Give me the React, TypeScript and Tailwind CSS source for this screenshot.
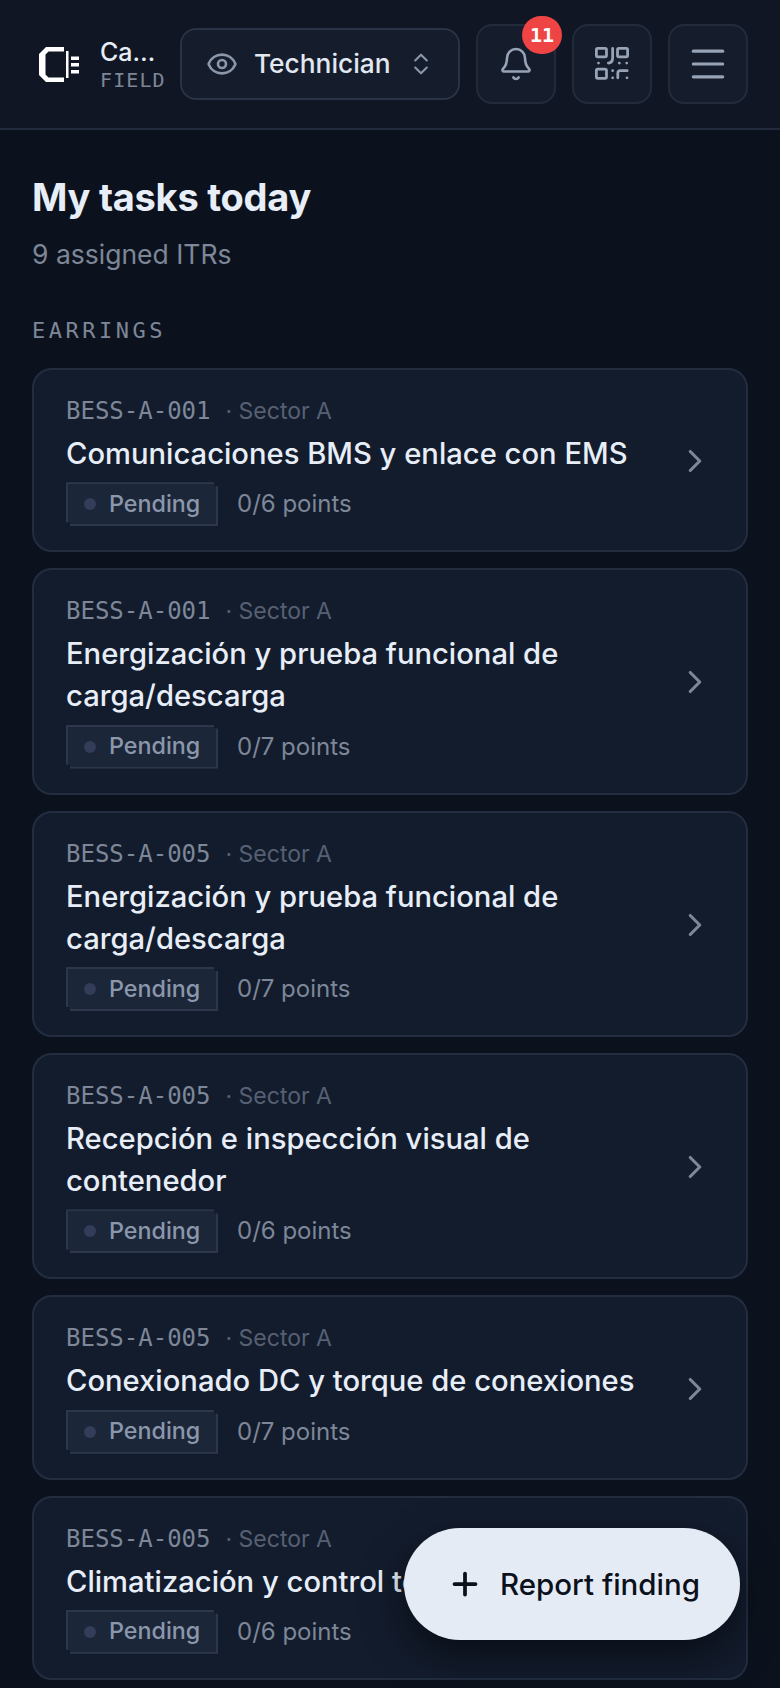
import React from "react";
import { Eye, ChevronsUpDown, Bell, Menu, ChevronRight, Plus } from "lucide-react";

const tasks = [
  { id: "BESS-A-001", title: "Comunicaciones BMS y enlace con EMS", pts: "0/6 points" },
  { id: "BESS-A-001", title: "Energización y prueba funcional de carga/descarga", pts: "0/7 points" },
  { id: "BESS-A-005", title: "Energización y prueba funcional de carga/descarga", pts: "0/7 points" },
  { id: "BESS-A-005", title: "Recepción e inspección visual de contenedor", pts: "0/6 points" },
  { id: "BESS-A-005", title: "Conexionado DC y torque de conexiones", pts: "0/7 points" },
  { id: "BESS-A-005", title: "Climatización y control térmico", pts: "0/6 points" },
];

function Logo() {
  return (
    <svg width="40" height="35" viewBox="0 0 40 35" fill="#fff" className="shrink-0">
      <path d="M7 0H25V4.5H9.5L6.5 7.5V27.5L9.5 30.5H25V35H7L0 28V7Z" />
      <rect x="27" y="4" width="2.5" height="27" />
      <rect x="32" y="9.5" width="8" height="3.5" />
      <rect x="32" y="16" width="8" height="3.5" />
      <rect x="32" y="23" width="8" height="3.5" />
    </svg>
  );
}

function Qr() {
  return (
    <svg width="34" height="34" viewBox="-1.5 -1.5 37 37" fill="none" stroke="#97a3b6" strokeWidth="3" strokeLinecap="round" strokeLinejoin="round">
      <rect x="0" y="0" width="11" height="9.3" rx="1.5" />
      <rect x="23" y="0" width="11" height="9.3" rx="1.5" />
      <rect x="0" y="22.7" width="11" height="10" rx="1.5" />
      <path d="M17.7 0V10Q17.7 16 13 16M2.3 16h.01M25 16h.01M33 16h.01M17.7 24.3v.01M17.7 32v.01M23.3 32V27Q23.3 24.3 26 24.3H33.5M33.3 32v.01" />
    </svg>
  );
}

function Card({ id, title, pts }: { id: string; title: string; pts: string }) {
  return (
    <div className="flex items-center rounded-[20px] border-2 border-[#222d40] bg-[#131c2d] pl-8 pr-[32px] pt-[26px] pb-[24px]">
      <div className="min-w-0 flex-1 pr-[30px]">
        <div className="flex items-center leading-[30px]">
          <span className="font-['DejaVu_Sans_Mono',monospace] text-[24px] text-[#7d8798]">{id}</span>
          <span className="ml-[15px] text-[23px] text-[#566072]">· Sector A</span>
        </div>
        <div className="mt-[7px] text-[29.2px] font-medium leading-[42.2px] text-[#e8eef7]">{title}</div>
        <div className="mt-[7px] flex items-center gap-[19px]">
          <span className="flex h-[44px] w-[152px] items-center gap-[13px] border-2 border-[#2c374c] bg-[#1c2639] pl-4 text-[23.3px] font-medium text-[#8b97aa] [clip-path:polygon(0_0,calc(100%-4px)_0,calc(100%-4px)_4px,100%_4px,100%_100%,4px_100%,4px_calc(100%-4px),0_calc(100%-4px))]">
            <span className="h-3 w-3 rounded-full bg-[#333c58]" />
            Pending
          </span>
          <span className="text-[24px] text-[#7d8798]">{pts}</span>
        </div>
      </div>
      <ChevronRight size={38} strokeWidth={2} className="shrink-0 text-[#7d8798]" />
    </div>
  );
}

export default function App() {
  return (
    <div className="relative h-[1688px] w-[780px] overflow-hidden bg-[#0c121d] font-['Inter',sans-serif]">
      <header className="flex h-[130px] items-center border-b-2 border-[#222b3c] bg-[#101623] pl-[39px] pr-8">
        <Logo />
        <div className="ml-[21px] w-[64px] shrink-0">
          <div className="text-[25px] font-medium leading-[32px] text-[#e8eef7]">
            Ca<span className="tracking-[-1.5px]">…</span>
          </div>
          <div className="font-['DejaVu_Sans_Mono',monospace] text-[20px] leading-[24px] tracking-[1.1px] text-[#7d8798]">FIELD</div>
        </div>
        <div className="ml-4 flex h-[72px] w-[280px] shrink-0 items-center rounded-[16px] border-2 border-[#293347] bg-[#151d2c] pl-[24px]">
          <Eye size={32} strokeWidth={2} className="text-[#8b97aa]" />
          <span className="ml-[16px] text-[26.3px] font-medium text-[#e2e8f0]">Technician</span>
          <ChevronsUpDown size={28} strokeWidth={1.75} className="ml-[16px] text-[#8b97aa]" />
        </div>
        <div className="relative ml-4 flex h-20 w-20 shrink-0 items-center justify-center rounded-[16px] border-2 border-[#222b3c] bg-[#151d2c]">
          <Bell size={36} strokeWidth={1.75} className="text-[#97a3b6]" />
          <span className="absolute -top-[10px] left-[44px] flex h-[38px] w-10 items-center justify-center rounded-full bg-[#ef4444] font-['DejaVu_Sans_Mono',monospace] text-[20px] font-bold text-white">11</span>
        </div>
        <div className="ml-4 flex h-20 w-20 shrink-0 items-center justify-center rounded-[16px] border-2 border-[#222b3c] bg-[#151d2c]">
          <Qr />
        </div>
        <div className="ml-4 flex h-20 w-20 shrink-0 items-center justify-center rounded-[16px] border-2 border-[#222b3c] bg-[#151d2c]">
          <Menu size={44} strokeWidth={1.75} className="text-[#97a3b6]" />
        </div>
      </header>
      <main className="px-8 pt-[43px]">
        <h1 className="text-[38px] font-bold leading-[48px] tracking-[-0.25px] text-[#e8eef7]">My tasks today</h1>
        <p className="mt-[15px] text-[26.5px] leading-[36px] text-[#7d8798]">9 assigned ITRs</p>
        <div className="mt-[45px] font-['DejaVu_Sans_Mono',monospace] text-[22px] leading-[28px] tracking-[3.5px] text-[#7d8798]">EARRINGS</div>
        <div className="mt-[23px] flex flex-col gap-4">
          {tasks.map((t, i) => (
            <Card key={i} {...t} />
          ))}
        </div>
      </main>
      <button className="absolute left-[404px] top-[1528px] flex h-[112px] w-[336px] items-center rounded-full bg-[#e5ebf4] pl-[43px] text-[29.5px] font-medium text-[#0b111c] shadow-[0_16px_40px_rgba(0,0,0,0.5)]">
        <Plus size={36} strokeWidth={2.5} />
        <span className="ml-[17px]">Report finding</span>
      </button>
    </div>
  );
}
